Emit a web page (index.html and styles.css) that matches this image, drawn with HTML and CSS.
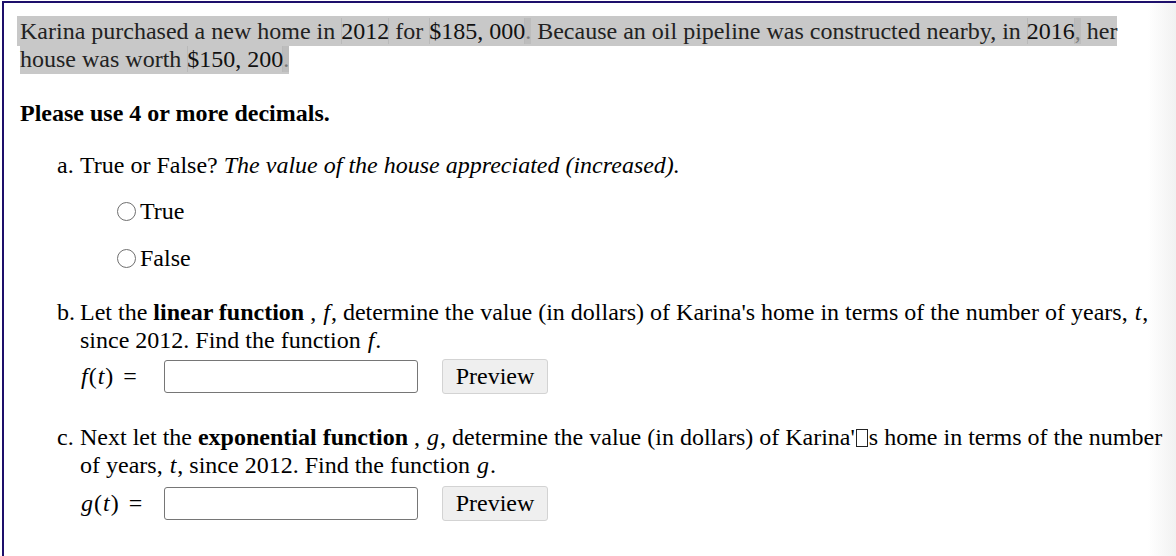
FILE: index.html
```html
<!DOCTYPE html>
<html>
<head>
<meta charset="utf-8">
<link rel="stylesheet" href="styles.css">
</head>
<body>
<div class="frame">
  <p class="intro"><span class="hl">Karina purchased a new home in <span class="num">2012</span> for <span class="num">$185, 000</span><span class="dot">.</span> Because an oil pipeline was constructed nearby, in <span class="num">2016</span><span class="dot">,</span> her house was worth <span class="num">$150, 200</span><span class="dot">.</span></span></p>

  <p class="note">Please use 4 or more decimals.</p>

  <div class="part part-a">
    <span class="lbl">a.</span>
    <div class="body">True or False? <i>The value of the house appreciated (increased).</i></div>
  </div>
  <div class="choices">
    <label class="choice"><span class="radio"></span>True</label>
    <label class="choice"><span class="radio"></span>False</label>
  </div>

  <div class="part part-b">
    <span class="lbl">b.</span>
    <div class="body">Let the <b>linear function</b> , <i class="m">f</i>, determine the value (in dollars) of Karina's home in terms of the number of years, <i class="m">t</i>, since 2012. Find the function <i class="m">f</i>.
      <div class="answer answer-b">
        <span class="math"><i class="mv">f</i><span class="par">(</span><i class="mv">t</i><span class="par">)</span><span class="eq">=</span></span>
        <span class="input"></span>
        <span class="btn">Preview</span>
      </div>
    </div>
  </div>

  <div class="part part-c">
    <span class="lbl">c.</span>
    <div class="body">Next let the <b>exponential function</b> , <i class="m">g</i>, determine the value (in dollars) of Karina'<span class="box"></span>s home in terms of the number of years, <i class="m">t</i>, since 2012. Find the function <i class="m">g</i>.
      <div class="answer answer-c">
        <span class="math"><i class="mv">g</i><span class="par">(</span><i class="mv">t</i><span class="par">)</span><span class="eq">=</span></span>
        <span class="input"></span>
        <span class="btn">Preview</span>
      </div>
    </div>
  </div>
</div>
</body>
</html>
```

FILE: styles.css
```css
html, body {
  margin: 0;
  padding: 0;
}
body {
  width: 1176px;
  height: 556px;
  overflow: hidden;
  background: linear-gradient(to right, #ffffff 0, #ffffff 1148px, #f1f1f1 1176px);
  font-family: "Liberation Serif", "Times New Roman", serif;
  font-size: 24px;
  color: #000;
}
.frame {
  margin: 1px 0 0 2px;
  border-top: 2px solid #1d0f6b;
  border-left: 2px solid #1d0f6b;
  padding: 14px 4px 0 16px;
  height: 555px;
  box-sizing: border-box;
}
.intro {
  margin: 0;
  line-height: 28px;
  color: #222;
}
.hl {
  background: #c8c8c8;
  padding: 2px 0 2px 3px;
  margin-left: -3px;
}
.num {
  color: #111;
  box-shadow: inset 1px 0 0 #b9b9b9, inset -1px 0 0 #b9b9b9;
}
.dot {
  background: #bdbdbd;
  color: #777;
}
.note {
  margin: 26px 0 0 0;
  font-weight: bold;
  line-height: 28px;
}
.part {
  display: flex;
  margin-left: 37px;
  line-height: 28px;
}
.lbl {
  width: 23px;
  flex: none;
}
.body {
  flex: 1;
}
.part-a {
  margin-top: 24px;
}
.choices {
  display: flex;
  flex-direction: column;
  gap: 19px;
  margin: 18px 0 0 95px;
  line-height: 28px;
}
.choice {
  display: flex;
  align-items: center;
  gap: 4px;
}
.radio {
  width: 19px;
  height: 19px;
  border: 1.5px solid #6f6f6f;
  border-radius: 50%;
  box-sizing: border-box;
  flex: none;
  margin-left: 2px;
}
.part-b {
  margin-top: 26px;
}
.part-c {
  margin-top: 27px;
}
i.m {
  font-style: italic;
  margin: 0 1px;
}
.answer {
  display: flex;
  align-items: center;
  height: 40px;
}
.answer-b {
  margin-top: 2px;
}
.answer-c {
  margin-top: 4px;
}
.math {
  width: 84px;
  flex: none;
  display: flex;
  align-items: baseline;
}
.mv {
  font-style: italic;
  padding: 0 1px;
}
.eq {
  margin-left: 10px;
}
.input {
  width: 254px;
  height: 33px;
  box-sizing: border-box;
  border: 1px solid #767676;
  border-radius: 3px;
  background: #fff;
  flex: none;
}
.btn {
  margin-left: 24px;
  height: 35px;
  width: 106px;
  box-sizing: border-box;
  border: 1px solid #d3d3d3;
  border-radius: 3px;
  background: #efefef;
  display: flex;
  align-items: center;
  justify-content: center;
  line-height: 1;
}
.box {
  display: inline-block;
  width: 12px;
  height: 18px;
  border: 1px solid #222;
  box-sizing: border-box;
  vertical-align: -2px;
  margin: 0 1px;
}
```
